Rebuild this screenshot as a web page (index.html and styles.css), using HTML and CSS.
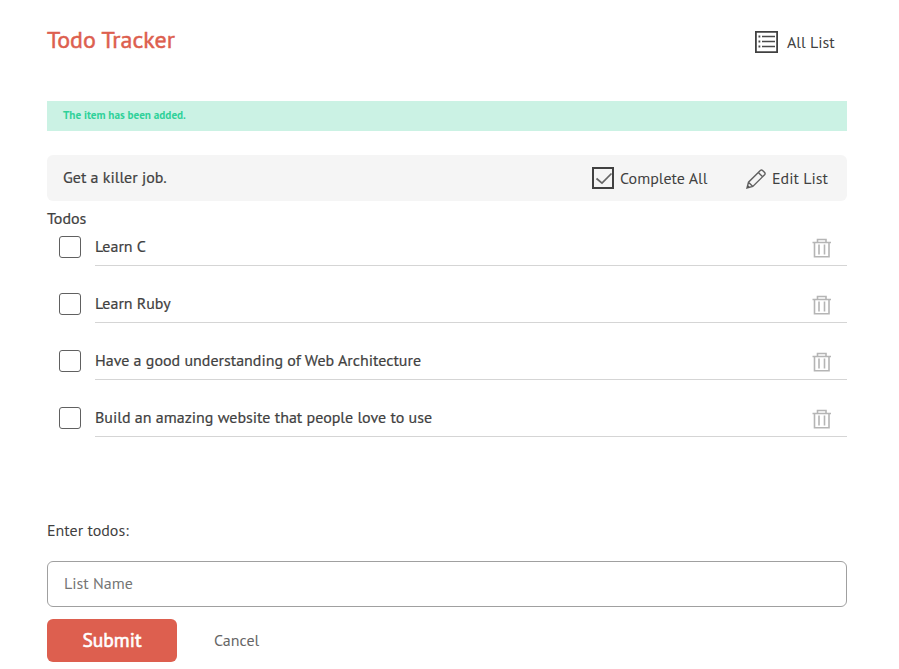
FILE: index.html
```html
<!DOCTYPE html>
<html lang="en">
<head>
<meta charset="utf-8">
<title>Todo Tracker</title>
<link rel="stylesheet" href="styles.css">
</head>
<body>
<svg class="defs" width="0" height="0">
  <symbol id="trash" viewBox="0 0 20 20"><path d="M.5 4.500h18.500M5.500 4V1.500h8.500V4M2.500 5v13.800h14.500V5M7 6.500v10M12.500 6.500v10" fill="none" stroke="#b5b5b5" stroke-width="1.600"/></symbol>
</svg>
<div class="page">
  <header class="top">
    <h1>Todo Tracker</h1>
    <a class="all"><svg width="23" height="22" viewBox="0 0 23 22"><path d="M.9.9h21.200v20.200H.9z" fill="#fff" stroke="#414141" stroke-width="1.800"/><path d="M7 5.500h13M7 10.500h13M7 15.500h13" stroke="#4a4a4a" stroke-width="1.300"/><path d="M3.500 5.500H5.300M3.500 10.500H5.300M3.500 15.500H5.300" stroke="#4a4a4a" stroke-width="1.800"/></svg><span>All List</span></a>
  </header>
  <div class="flash">The item has been added.</div>
  <div class="bar">
    <h2>Get a killer job.</h2>
    <a class="complete"><svg width="22" height="22" viewBox="0 0 22 22"><path d="M1 1h20v20H1z" fill="#f5f5f5" stroke="#414141" stroke-width="2"/><path d="M4.500 11.500l5.500 4.700L19.500 6.500" fill="none" stroke="#666" stroke-width="1.700"/></svg><span>Complete All</span></a>
    <a class="edit"><svg width="20" height="20" viewBox="0 0 20 20"><path d="M1 19l1.500-5.800L14.300 1.500q1.200-1 2.300 0l2 2q1 1.200 0 2.300L6.800 17.400zM2.500 13.200l4.300 4.200M12.300 3.500l4.300 4.300" fill="none" stroke="#606060" stroke-width="1.400"/><path d="M1 19l.8-3 2.200 2.200z" fill="#555"/></svg><span>Edit List</span></a>
  </div>
  <h3>Todos</h3>
  <ul>
    <li><i class="box"></i><div class="item"><span>Learn C</span><svg width="20" height="20"><use href="#trash"/></svg></div></li>
    <li><i class="box"></i><div class="item"><span>Learn Ruby</span><svg width="20" height="20"><use href="#trash"/></svg></div></li>
    <li><i class="box"></i><div class="item"><span>Have a good understanding of Web Architecture</span><svg width="20" height="20"><use href="#trash"/></svg></div></li>
    <li><i class="box"></i><div class="item"><span>Build an amazing website that people love to use</span><svg width="20" height="20"><use href="#trash"/></svg></div></li>
  </ul>
  <form>
    <label>Enter todos:</label>
    <input type="text" placeholder="List Name">
    <div class="actions"><button type="button">Submit</button><a class="cancel">Cancel</a></div>
  </form>
</div>
</body>
</html>
```
FILE: styles.css
```css
* { box-sizing: border-box; }
body { margin: 0; background: #fff; color: #414141; font: 16px/20px "PT Sans", "Noto Sans", sans-serif; overflow: hidden; }
.defs { position: absolute; }
.page { width: 800px; margin-left: 47px; height: 669px; }
h1, h2, h3, ul { margin: 0; padding: 0; font-weight: 400; font-size: 16px; }
h2, h3, .item span { -webkit-text-stroke: .2px; }
svg { display: block; flex: none; }
a { display: flex; align-items: center; white-space: nowrap; }
.top { display: flex; justify-content: space-between; height: 101px; padding-top: 26px; }
h1 { font-size: 24px; line-height: 28px; color: #dd5f4f; -webkit-text-stroke: .5px; }
.all { height: 32px; width: 92px; gap: 9px; }
.flash { height: 30px; padding: 5px 16px; background: #cbf2e4; color: #2fd199; font-size: 11.2px; line-height: 19px; font-weight: 700; }
.bar { display: flex; align-items: center; height: 46px; margin-top: 24px; padding-left: 16px; background: #f5f5f5; border-radius: 6px; }
.bar h2 { width: 529px; padding-bottom: 2px; }
.complete { width: 154px; gap: 6px; }
.edit { gap: 6px; padding-top: 2px; }
.edit span { padding-bottom: 2px; }
h3 { margin-top: 7px; height: 21px; }
ul { list-style: none; }
li { display: flex; height: 57px; padding: 7px 0 0 12px; }
.box { width: 22px; height: 22px; border: 1px solid #606060; border-radius: 3px; background: #fff; }
.item { display: flex; justify-content: space-between; width: 752px; height: 30px; margin-left: 14px; padding-right: 15px; border-bottom: 1px solid #d5d5d5; }
.item svg { margin-top: 2px; }
form { margin-top: 63px; }
label { display: block; height: 41px; }
input { display: block; width: 800px; height: 46px; padding: 0 16px 2px; border: 1px solid #a0a0a0; border-radius: 6px; background: #fff; font: inherit; color: #414141; }
input::placeholder { color: #757575; opacity: 1; }
.actions { display: flex; align-items: center; margin-top: 12px; height: 43px; }
button { width: 130px; height: 43px; padding: 0 0 2px; border: 0; border-radius: 6px; background: #dd5f4f; color: #fff; font: 19.5px/24px "PT Sans", "Noto Sans", sans-serif; -webkit-text-stroke: .6px; }
.cancel { margin-left: 37px; padding-bottom: 2px; color: #666; }
```
